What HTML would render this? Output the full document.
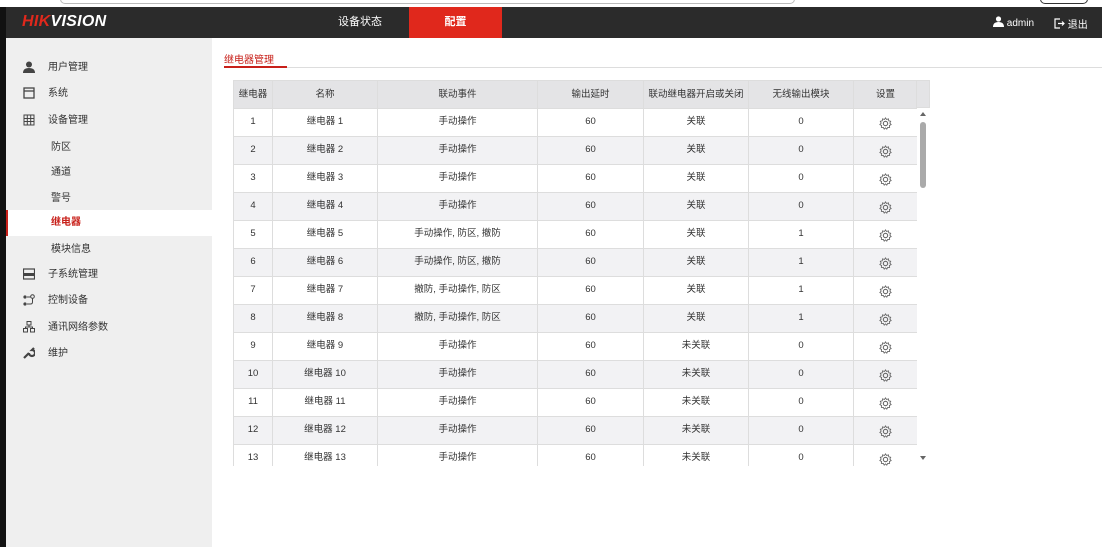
<!DOCTYPE html>
<html><head><meta charset="utf-8"><style>
*{margin:0;padding:0;box-sizing:border-box}
body{width:1102px;height:547px;overflow:hidden;background:#fff;font-family:"Liberation Sans","Noto Sans CJK SC",sans-serif;font-size:10px;color:#333;position:relative}
.top{position:absolute;left:0;top:0;width:1102px;height:7px;background:#fff}
.hdr{position:absolute;left:0;top:7px;width:1102px;height:31px;background:#2b2b2b;color:#fff}
.logo{position:absolute;left:22px;top:6px;font-size:16px;font-weight:bold;font-style:italic;letter-spacing:0.3px}
.nav{position:absolute;top:0;height:31px;line-height:31px;font-size:11px;text-align:center}
.lb{position:absolute;left:0;top:7px;width:6px;height:540px;background:#111}
.side{position:absolute;left:6px;top:38px;width:206px;height:509px;background:#efefef}
.it{position:absolute;left:0;width:206px;height:20px;line-height:20px;font-size:10px;color:#333}
.it .t{position:absolute;left:42px;top:2px}
.it.s .t{left:45px}
.it svg{position:absolute;left:17px;top:5px}
.sel{background:#fff;border-left:2px solid #c8201a;color:#c8201a;height:26px;line-height:26px}
.sel .t{top:0}
table{position:absolute;left:233px;top:80px;border-collapse:collapse;font-size:9.5px}
td,th{border:1px solid #ddd;text-align:center;height:28px;padding:0;font-weight:normal;vertical-align:middle;line-height:12px}
th{background:#e4e4e6;height:28px}
tr:nth-child(even) td{background:#f2f2f4}
tr:nth-child(odd) td{background:#fff}
td span{display:inline-block;line-height:12px;height:12px;vertical-align:middle}
td svg{display:block;margin:1px auto 0}
</style></head><body>
<div class="top"><div style="position:absolute;left:60px;top:-6px;width:735px;height:10px;border:1px solid #bbb;border-radius:5px"></div><div style="position:absolute;left:1040px;top:-6px;width:48px;height:10px;border:1px solid #333;border-radius:5px"></div></div>
<div class="hdr">
<div class="logo"><span style="color:#e0281c">HIK</span>VISION</div>
<div class="nav" style="left:310px;width:100px">设备状态</div>
<div class="nav" style="left:409px;width:93px;background:#e0281c;font-weight:bold">配置</div>
<div style="position:absolute;left:993px;top:9px;font-size:10px"><svg width="11" height="11" viewBox="0 0 11 11" style="vertical-align:-1px"><circle cx="5.5" cy="3" r="2.6" fill="#fff"/><path d="M0 11 Q0 6 5.5 6 Q11 6 11 11Z" fill="#fff"/></svg> admin</div>
<div style="position:absolute;left:1054px;top:9px;font-size:10px"><svg width="11" height="11" viewBox="0 0 11 11" style="vertical-align:-1px"><path d="M6 1H1V10H6M4 5.5H10M8 3.5L10 5.5L8 7.5" stroke="#fff" fill="none" stroke-width="1.2"/></svg> 退出</div>
</div>
<div class="lb"></div>
<div class="side">
<div class="it" style="top:18px"><svg width="12" height="12" viewBox="0 0 12 12"><circle cx="6" cy="3.5" r="3" fill="#444"/><path d="M0 12Q0 7 6 7Q12 7 12 12Z" fill="#444"/></svg><span class="t">用户管理</span></div>
<div class="it" style="top:44px"><svg width="12" height="12" viewBox="0 0 12 12"><rect x="1" y="1" width="10" height="10" fill="none" stroke="#444" stroke-width="1.3"/><path d="M1 4H11" stroke="#444" stroke-width="1.3"/></svg><span class="t">系统</span></div>
<div class="it" style="top:71px"><svg width="12" height="12" viewBox="0 0 12 12"><path d="M1 1H11V11H1ZM1 4.5H11M1 7.5H11M4.3 1V11M7.7 1V11" fill="none" stroke="#444" stroke-width="1"/></svg><span class="t">设备管理</span></div>
<div class="it s" style="top:98px"><span class="t">防区</span></div>
<div class="it s" style="top:123px"><span class="t">通道</span></div>
<div class="it s" style="top:149px"><span class="t">警号</span></div>
<div class="it s sel" style="top:172px"><span class="t" style="left:43px;font-weight:bold">继电器</span></div>
<div class="it s" style="top:200px"><span class="t">模块信息</span></div>
<div class="it" style="top:225px"><svg width="12" height="12" viewBox="0 0 12 12"><rect x="0.5" y="1" width="11" height="10" fill="none" stroke="#444" stroke-width="1.2"/><rect x="0.5" y="5" width="11" height="3" fill="#444"/></svg><span class="t">子系统管理</span></div>
<div class="it" style="top:251px"><svg width="12" height="12" viewBox="0 0 12 12"><circle cx="2" cy="3" r="1.6" fill="#444"/><circle cx="2" cy="10" r="1.6" fill="#444"/><circle cx="9.5" cy="2.5" r="1.8" fill="none" stroke="#444"/><path d="M4 3H7.5M9.5 4.5V8Q9.5 10 7.5 10H4" fill="none" stroke="#444"/></svg><span class="t">控制设备</span></div>
<div class="it" style="top:278px"><svg width="12" height="12" viewBox="0 0 12 12"><rect x="4" y="0.5" width="4" height="3.5" fill="none" stroke="#444"/><rect x="0.5" y="7.5" width="4" height="3.5" fill="none" stroke="#444"/><rect x="7.5" y="7.5" width="4" height="3.5" fill="none" stroke="#444"/><path d="M6 4V6M2.5 7.5V6H9.5V7.5" fill="none" stroke="#444"/></svg><span class="t">通讯网络参数</span></div>
<div class="it" style="top:304px"><svg width="12" height="12" viewBox="0 0 12 12"><path d="M1 11L6 6M6 6A3 3 0 1 0 9 3L11 1" stroke="#444" stroke-width="2.2" fill="none"/></svg><span class="t">维护</span></div>
</div>
<div style="position:absolute;left:224px;top:51px;font-size:10px;color:#c8201a">继电器管理</div>
<div style="position:absolute;left:224px;top:66px;width:63px;height:2px;background:#c8201a"></div>
<div style="position:absolute;left:287px;top:67px;width:815px;height:1px;background:#ddd"></div>
<div style="position:absolute;left:233px;top:80px;width:697px;height:386px;overflow:hidden">
<table style="left:0;top:0;width:684px;table-layout:fixed">
<colgroup><col style="width:39px"><col style="width:105px"><col style="width:160px"><col style="width:106px"><col style="width:105px"><col style="width:105px"><col style="width:64px"></colgroup>
<tr><th>继电器</th><th>名称</th><th>联动事件</th><th>输出延时</th><th>联动继电器开启或关闭</th><th>无线输出模块</th><th>设置</th></tr>
</table>
<div style="position:absolute;left:683px;top:0;width:14px;height:28px;background:#e4e4e6;border:1px solid #ddd"></div>
<table id="tb" style="left:0;top:28px;width:684px;table-layout:fixed">
<colgroup><col style="width:39px"><col style="width:105px"><col style="width:160px"><col style="width:106px"><col style="width:105px"><col style="width:105px"><col style="width:64px"></colgroup>
</table>
<div style="position:absolute;left:684px;top:28px;width:13px;height:358px;background:#fff"><div style="position:absolute;left:3px;top:4px;border:3px solid transparent;border-bottom:4px solid #666;border-top:0"></div><div style="position:absolute;left:3px;top:14px;width:6px;height:66px;background:#aaa;border-radius:3px"></div><div style="position:absolute;left:3px;top:348px;border:3px solid transparent;border-top:4px solid #666;border-bottom:0"></div></div>
</div>
<script>
var ev=["手动操作","手动操作","手动操作","手动操作","手动操作, 防区, 撤防","手动操作, 防区, 撤防","撤防, 手动操作, 防区","撤防, 手动操作, 防区","手动操作","手动操作","手动操作","手动操作","手动操作"];
var w=[0,0,0,0,1,1,1,1,0,0,0,0,0];
var g='<svg width="13" height="13" viewBox="0 0 12 12"><circle cx="6" cy="6" r="2" fill="none" stroke="#666"/><path d="M6 0.8L7 2.3L8.7 1.7L9 3.5L10.8 4L10 5.6L11.2 7L9.6 7.8L9.8 9.6L8 9.6L7.2 11.2L6 10L4.8 11.2L4 9.6L2.2 9.6L2.4 7.8L0.8 7L2 5.6L1.2 4L3 3.5L3.3 1.7L5 2.3Z" fill="none" stroke="#666" stroke-width="0.8"/></svg>';
function s(x){return '<span>'+x+'</span>';}
var h='';for(var i=0;i<13;i++){h+='<tr><td>'+s(i+1)+'</td><td>'+s('继电器 '+(i+1))+'</td><td>'+s(ev[i])+'</td><td>'+s('60')+'</td><td>'+s(i<8?'关联':'未关联')+'</td><td>'+s(w[i])+'</td><td>'+g+'</td></tr>';}
document.getElementById('tb').innerHTML+=h;
</script>
</body></html>
